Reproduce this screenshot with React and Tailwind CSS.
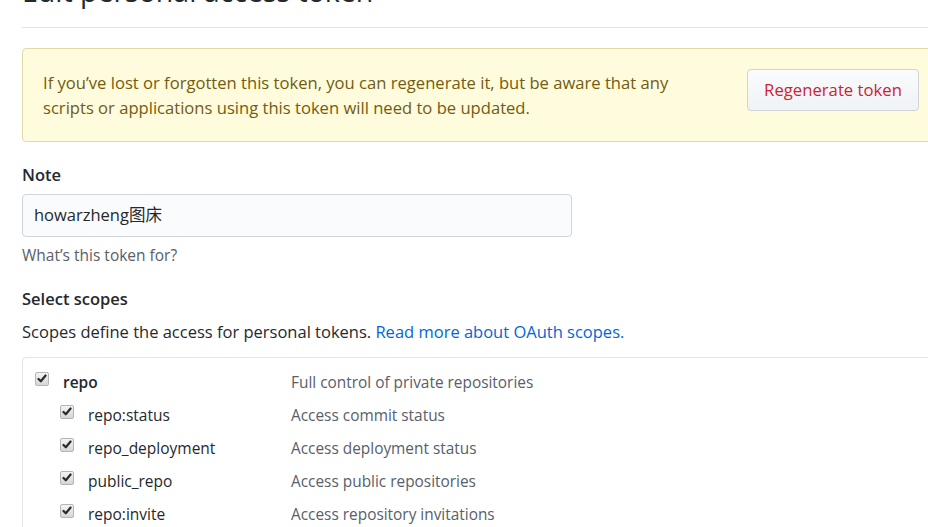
import React from "react";

const font = { fontFamily: '"Open Sans", "Noto Sans CJK SC", sans-serif' };

const scopes = [
  { name: "repo", desc: "Full control of private repositories", top: true },
  { name: "repo:status", desc: "Access commit status" },
  { name: "repo_deployment", desc: "Access deployment status" },
  { name: "public_repo", desc: "Access public repositories" },
  { name: "repo:invite", desc: "Access repository invitations" },
];

const Check = () => (
  <span className="inline-flex h-[14px] w-[14px] shrink-0 items-center justify-center rounded-[2px] border border-[#b5b5b5] bg-gradient-to-b from-[#f4f4f4] to-[#d6d6d6]">
    <svg width="10" height="9" viewBox="0 0 10 9">
      <path d="M1.5 5 L3.8 7.3 L8.6 1.5" fill="none" stroke="#2b2b2b" strokeWidth="2.2" strokeLinecap="round" strokeLinejoin="round" />
    </svg>
  </span>
);

export default function App() {
  return (
    <div className="h-[527px] w-full overflow-hidden bg-white text-[#24292e]" style={font}>
      <div className="w-[918px] ml-[22px]">
        {/* Header */}
        <div className="mt-[-28px] border-b border-[#e1e4e8] pb-[17px]">
          <h2 className="text-[28.5px] leading-[38px] font-normal">Edit personal access token</h2>
        </div>

        {/* Flash */}
        <div className="mt-[20px] flex items-start justify-between rounded-[4px] border border-[#e2d9a6] bg-[#fffbdd] px-[20px] pt-[20px] pb-[21px]">
          <p className="text-[16.6px] leading-[25px] text-[#735c0f] mt-[1px]">
            If you’ve lost or forgotten this token, you can regenerate it, but be aware that any
            <br />
            scripts or applications using this token will need to be updated.
          </p>
          <button className="h-[42px] w-[172px] rounded-[4px] border border-[#d1d3d6] bg-gradient-to-b from-[#fafbfc] to-[#eff3f6] text-[16.7px] text-[#cb2431]">
            Regenerate token
          </button>
        </div>

        {/* Note */}
        <div className="mt-[21px]">
          <label className="block text-[16.5px] font-semibold leading-[24px]">Note</label>
          <div className="mt-[7px] flex h-[43px] w-[550px] items-center rounded-[4px] border border-[#d1d5da] bg-[#fafbfc] px-[11px] text-[16.5px]">
            howarzheng图床
          </div>
          <p className="mt-[7px] text-[15.5px] leading-[22px] text-[#586069]">What’s this token for?</p>
        </div>

        {/* Scopes */}
        <div className="mt-[21px]">
          <h3 className="text-[16.5px] font-semibold leading-[24px]">Select scopes</h3>
          <p className="mt-[9px] text-[16.5px] leading-[24px]">
            Scopes define the access for personal tokens.{" "}
            <a className="text-[#0366d6]">Read more about OAuth scopes.</a>
          </p>
          <div className="mt-[13px] rounded-[4px] border border-[#e1e4e8] pt-[8px]">
            {scopes.map((s) => (
              <div key={s.name} className="flex h-[33px] items-center">
                <div className={`flex items-center ${s.top ? "pl-[12px]" : "pl-[37px]"} w-[268px]`}>
                  <span className="mt-[-11px]"><Check /></span>
                  <span className={`ml-[14px] text-[15.5px] ${s.top ? "font-semibold" : ""}`}>{s.name}</span>
                </div>
                <span className="text-[15.4px] text-[#586069]">{s.desc}</span>
              </div>
            ))}
          </div>
        </div>
      </div>
    </div>
  );
}
